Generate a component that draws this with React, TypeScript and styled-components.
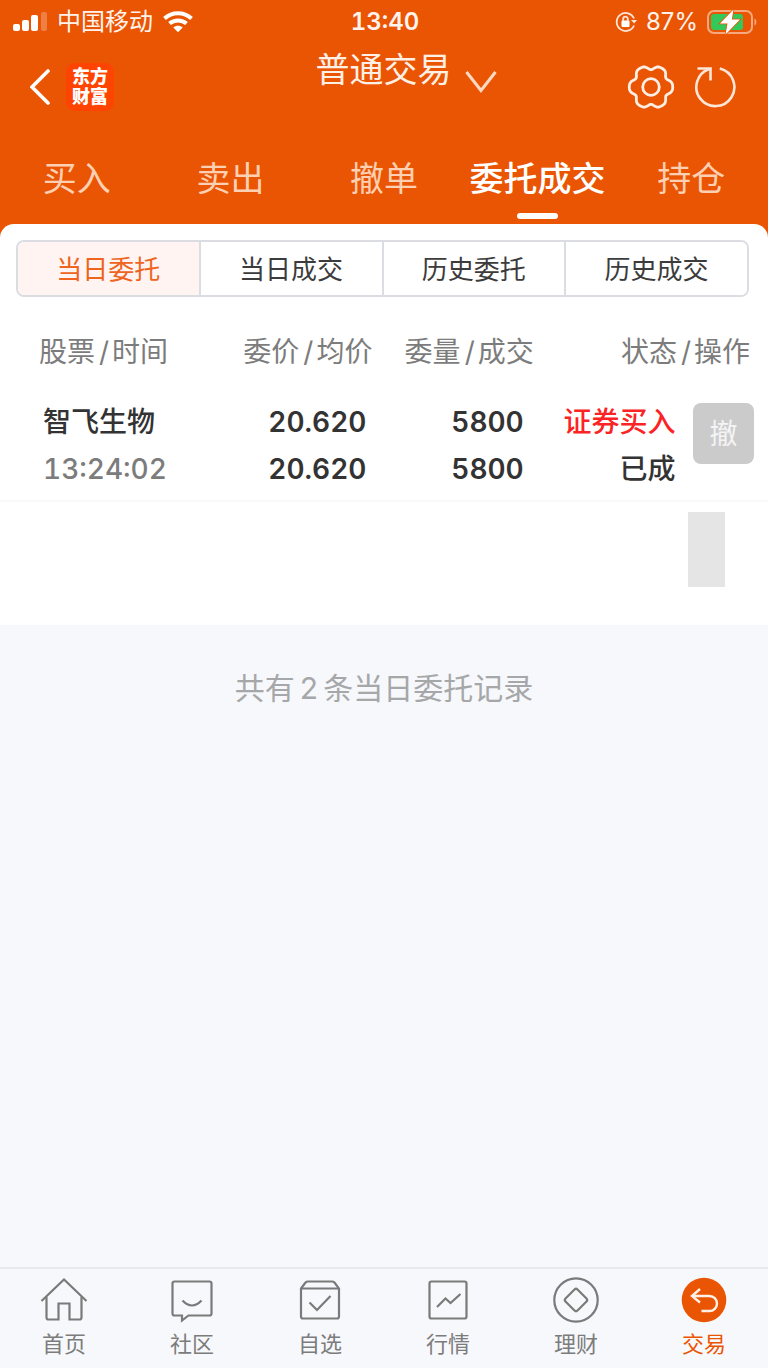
import React, { useState } from 'react';
import styled, { createGlobalStyle } from 'styled-components';

const ORANGE = '#ea5504';
const PAGE = '#f7f8fb';
const INK = '#333333';
const MUTED = '#7c7c7c';

const GlobalStyle = createGlobalStyle`
  *, *::before, *::after { box-sizing: border-box; }
  body {
    margin: 0;
    background: ${PAGE};
    color: ${INK};
    font-family: Inter, "Noto Sans CJK SC", sans-serif;
  }
  button {
    font: inherit;
    color: inherit;
    background: none;
    border: 0;
    padding: 0;
    cursor: pointer;
  }
  svg { display: block; flex: none; }
`;

const Screen = styled.div`
  min-height: 100vh;
  display: flex;
  flex-direction: column;
`;

const Header = styled.header`
  background: ${ORANGE};
  color: #fff;
`;

const StatusBar = styled.div`
  height: 42px;
  padding: 2px 11px 0 13px;
  display: grid;
  grid-template-columns: 1fr auto 1fr;
  align-items: center;
  font-size: 24px;
  line-height: 32px;
  color: #fff3ec;
`;

const StatusGroup = styled.div<{ $end?: boolean }>`
  display: flex;
  align-items: center;
  gap: ${(p) => (p.$end ? '9px' : '10px')};
  justify-content: ${(p) => (p.$end ? 'flex-end' : 'flex-start')};
`;

const Clock = styled.time`
  font-weight: 600;
  font-variant-numeric: tabular-nums;
`;

const NavBar = styled.div`
  height: 90px;
  padding: 0 31px 0 30px;
  display: grid;
  grid-template-columns: 1fr auto 1fr;
  align-items: center;
`;

const NavGroup = styled.div<{ $end?: boolean }>`
  display: flex;
  align-items: center;
  gap: ${(p) => (p.$end ? '18px' : '16px')};
  justify-content: ${(p) => (p.$end ? 'flex-end' : 'flex-start')};
`;

const Logo = styled.a`
  width: 48px;
  height: 48px;
  display: flex;
  align-items: center;
  justify-content: center;
  border-radius: 9px;
  background: #ff4300;
  color: #fff;
  font-size: 18px;
  line-height: 20px;
  font-weight: 900;
  text-align: center;
  text-decoration: none;
`;

const AccountButton = styled.button`
  display: flex;
  align-items: flex-end;
  gap: 13px;
  padding: 0 0 34px 45px;
  color: #fff0e6;
  font-size: 34px;
  line-height: 46px;
`;

const Tabs = styled.nav`
  display: flex;
`;

const Tab = styled.button<{ $active: boolean }>`
  flex: 1 1 0;
  min-width: 0;
  height: 92px;
  padding-top: 23px;
  display: flex;
  flex-direction: column;
  align-items: center;
  gap: 10px;
  white-space: nowrap;
  font-size: 34px;
  line-height: 48px;
  color: ${(p) => (p.$active ? '#fff' : '#fdd0b3')};
  font-weight: ${(p) => (p.$active ? 500 : 400)};

  &::after {
    content: '';
    width: 41px;
    height: 6px;
    border-radius: 3px;
    background: ${(p) => (p.$active ? '#fff' : 'transparent')};
  }
`;

const PanelBack = styled.div`
  background: linear-gradient(${ORANGE} 20px, #fff 20px);
`;

const Panel = styled.main`
  background: #fff;
  border-radius: 14px 14px 0 0;
  padding-top: 16px;
`;

const Segments = styled.div`
  margin: 0 19px 26px 16px;
  display: flex;
  border: 2px solid #dcdde3;
  border-radius: 8px;
  overflow: hidden;
`;

const Segment = styled.button<{ $active: boolean }>`
  flex: 1 1 0;
  min-width: 0;
  height: 53px;
  padding-top: 2px;
  font-size: 26px;
  line-height: 36px;
  color: ${(p) => (p.$active ? '#ee6420' : '#3c3c3c')};
  background: ${(p) => (p.$active ? '#fff4f1' : '#fff')};

  & + & { border-left: 2px solid #dcdde3; }
`;

const Orders = styled.table`
  width: 100%;
  table-layout: fixed;
  border-collapse: collapse;
  font-size: 28px;
`;

const Col = styled.col<{ $share: number }>`
  width: ${(p) => p.$share}%;
`;

const HeadCell = styled.th<{ $start?: boolean; $last?: boolean }>`
  height: 58px;
  padding: 0 ${(p) => (p.$last ? '18px' : '0')} 0 ${(p) => (p.$start ? '39px' : '0')};
  text-align: ${(p) => (p.$start ? 'left' : 'right')};
  font-weight: 400;
  line-height: 40px;
  color: ${MUTED};
  white-space: nowrap;
`;

const Slash = styled.span`
  padding: 0 3px 0 4px;
`;

const OrderRow = styled.tr`
  border-bottom: 2px solid #f9f9fa;
`;

const Cell = styled.td<{ $start?: boolean; $inset?: number }>`
  padding: 18px ${(p) => p.$inset ?? 8}px 7px ${(p) => (p.$start ? '43px' : '0')};
  text-align: ${(p) => (p.$start ? 'left' : 'right')};
  vertical-align: top;
  white-space: nowrap;
  font-variant-numeric: tabular-nums;
`;

const Line = styled.div<{ $tone?: 'muted' | 'buy' }>`
  line-height: 47px;
  font-weight: ${(p) => (p.$tone === 'muted' ? 500 : 600)};
  color: ${(p) => (p.$tone === 'muted' ? MUTED : p.$tone === 'buy' ? '#fb2323' : INK)};
`;

const Label = styled(Line)`
  font-weight: 500;
`;

const ActionCell = styled(Cell)`
  padding: 22px 14px 0 0;
`;

const CancelButton = styled.button`
  width: 61px;
  height: 61px;
  border-radius: 8px;
  background: #cbcbcb;
  color: #f4f4f4;
  line-height: 40px;
`;

const HiddenCell = styled.td`
  height: 124px;
  padding: 10px 43px 0 0;
  vertical-align: top;
`;

const Mask = styled.div`
  width: 37px;
  height: 75px;
  margin-left: auto;
  background: #e5e5e5;
`;

const Summary = styled.p`
  flex: 1;
  margin: 0;
  padding: 42px 16px;
  text-align: center;
  font-size: 30px;
  line-height: 42px;
  color: #a6a7a9;
`;

const Count = styled.span`
  padding: 0 5px;
`;

const BottomNav = styled.nav`
  height: 101px;
  display: flex;
  border-top: 2px solid #e6eaec;
`;

const BottomLink = styled.a<{ $active?: boolean }>`
  flex: 1 1 0;
  padding-top: 7px;
  display: flex;
  flex-direction: column;
  align-items: center;
  gap: 4px;
  font-size: 22px;
  line-height: 32px;
  text-decoration: none;
  color: ${(p) => (p.$active ? ORANGE : MUTED)};
`;

const SignalIcon = () => (
  <svg width="34" height="20" viewBox="0 0 34 20" fill="#fff" aria-hidden="true">
    <rect x="0" y="12" width="7" height="7" rx="2" />
    <rect x="9" y="8" width="7" height="11" rx="2" />
    <rect x="18" y="3" width="7" height="16" rx="2" />
    <rect x="28" y="0" width="6" height="19" rx="2" opacity="0.25" />
  </svg>
);

const WifiIcon = () => (
  <svg width="30" height="22" viewBox="0 0 30 22" fill="none" stroke="#fff" strokeWidth="4" aria-hidden="true">
    <path d="M1.500 7.500C9 .500 21 .500 28.500 7.500" />
    <path d="M6.500 12.600C11.200 8.400 18.800 8.400 23.500 12.600" />
    <path d="M10.300 16.500C12.800 14.200 17.200 14.200 19.700 16.500L15 21.300Z" fill="#fff" stroke="none" />
  </svg>
);

const LockIcon = () => (
  <svg width="22" height="22" viewBox="0 0 22 22" fill="none" stroke="#ffe6d8" strokeWidth="1.800" aria-hidden="true">
    <path d="M19 7.500A9 9 0 1 0 19 14.500" />
    <path d="M16 9H22L19.200 12.600Z" fill="#ffe6d8" stroke="none" />
    <rect x="6.500" y="9.500" width="8" height="6.500" rx="1" fill="#fff" stroke="none" />
    <path d="M8.200 10V8a2.300 2.300 0 0 1 4.600 0v2" />
  </svg>
);

const BatteryIcon = () => (
  <svg width="50" height="26" viewBox="0 0 50 26" aria-hidden="true">
    <rect x="1" y="2" width="44" height="22" rx="6" fill="none" stroke="#f6a980" strokeWidth="2" />
    <path d="M47.500 9.500C50 10.500 50 15.500 47.500 16.500Z" fill="#f6a980" />
    <rect x="4" y="5" width="32" height="16" rx="3" fill="#34c759" />
    <path
      d="M26.500 0.500L13 14.500H20.500L18.500 25.500L33 10.500H24.800Z"
      fill="#fff"
      stroke={ORANGE}
      strokeWidth="1.600"
      paintOrder="stroke"
    />
  </svg>
);

const BackIcon = () => (
  <svg width="20" height="36" viewBox="0 0 20 36" fill="none" stroke="#fff" strokeWidth="3.600" strokeLinecap="round" aria-hidden="true">
    <path d="M18 2L2 18L18 34" />
  </svg>
);

const ChevronIcon = () => (
  <svg width="32" height="22" viewBox="0 0 32 22" fill="none" stroke="#ffd9c2" strokeWidth="3" aria-hidden="true">
    <path d="M1.500 1L16 19.500L30.500 1" />
  </svg>
);

/* Six-lobed outline with flat lobes at every 60 degrees and a dip between them. */
const gearPath = (() => {
  const steps = 120;
  const points = Array.from({ length: steps }, (_, i) => {
    const a = (i / steps) * Math.PI * 2;
    const r = 20 + 2.2 * Math.cos(6 * a) - 0.5 * Math.cos(12 * a);
    return `${(24 + r * Math.cos(a)).toFixed(2)} ${(24 + r * Math.sin(a)).toFixed(2)}`;
  });
  return `M${points.join('L')}Z`;
})();

const GearIcon = () => (
  <svg width="48" height="48" viewBox="0 0 48 48" fill="none" stroke="#ffeee4" strokeWidth="2.800" strokeLinejoin="round" aria-hidden="true">
    <path d={gearPath} />
    <circle cx="24" cy="24" r="8.300" />
  </svg>
);

const RefreshIcon = () => (
  <svg width="44" height="44" viewBox="0 0 44 44" fill="none" stroke="#ffe6d8" strokeWidth="2.600" aria-hidden="true">
    <path d="M26.800 3.600A19 19 0 1 1 16.500 4" />
    <path d="M4.500 3.500H17.500V15.500" />
  </svg>
);

const LineIcon = ({ children }: { children: React.ReactNode }) => (
  <svg width="48" height="48" viewBox="0 0 48 48" fill="none" stroke="#7a7a7a" strokeWidth="2.200" aria-hidden="true">
    {children}
  </svg>
);

const bottomItems = [
  {
    label: '首页',
    icon: (
      <LineIcon>
        <path d="M1.500 25L24 3.500L46.500 25" />
        <path d="M6.500 21V41.500Q6.500 43.500 8.500 43.500H18.500V27.500H29.500V43.500H39.500Q41.500 43.500 41.500 41.500V21" />
      </LineIcon>
    ),
  },
  {
    label: '社区',
    icon: (
      <LineIcon>
        <path d="M6.500 5.500H41.500Q43.500 5.500 43.500 7.500V37.500Q43.500 39.500 41.500 39.500H20.500L14 44.500V39.500H6.500Q4.500 39.500 4.500 37.500V7.500Q4.500 5.500 6.500 5.500Z" />
        <path d="M14.500 24.500Q24 34.500 33.500 24.500" />
      </LineIcon>
    ),
  },
  {
    label: '自选',
    icon: (
      <LineIcon>
        <path d="M5 12.500L9.500 6.500Q10.500 5.500 12 5.500H36Q37.500 5.500 38.500 6.500L43 12.500V40.500Q43 42.500 41 42.500H7Q5 42.500 5 40.500Z" />
        <path d="M5 12.500H43" />
        <path d="M13.500 26.500L21 34L34.500 20" />
      </LineIcon>
    ),
  },
  {
    label: '行情',
    icon: (
      <LineIcon>
        <rect x="5.500" y="5.500" width="37" height="37" rx="2" />
        <path d="M13 31L21.500 22.500L26.500 27L36.500 18" />
      </LineIcon>
    ),
  },
  {
    label: '理财',
    icon: (
      <LineIcon>
        <circle cx="24" cy="24" r="21.700" />
        <path d="M22.500 13.500Q24 12 25.500 13.500L34.500 22.500Q36 24 34.500 25.500L25.500 34.500Q24 36 22.500 34.500L13.500 25.500Q12 24 13.500 22.500Z" />
      </LineIcon>
    ),
  },
  {
    label: '交易',
    icon: (
      <svg width="48" height="48" viewBox="0 0 48 48" fill="none" stroke="#fff0e8" strokeWidth="2.400" aria-hidden="true">
        <circle cx="24" cy="24" r="22.300" fill={ORANGE} stroke="none" />
        <path d="M20 13L12 20L20 26.500" />
        <path d="M12 20H29.500A7.500 7.500 0 0 1 29.500 35H21.500" />
      </svg>
    ),
  },
];

const tabs = ['买入', '卖出', '撤单', '委托成交', '持仓'];
const segments = ['当日委托', '当日成交', '历史委托', '历史成交'];

const Pair = ({ a, b }: { a: string; b: string }) => (
  <>
    {a}
    <Slash>/</Slash>
    {b}
  </>
);

export default function App() {
  const [tab, setTab] = useState('委托成交');
  const [segment, setSegment] = useState('当日委托');

  return (
    <Screen>
      <GlobalStyle />
      <Header>
        <StatusBar>
          <StatusGroup>
            <SignalIcon />
            <span>中国移动</span>
            <WifiIcon />
          </StatusGroup>
          <Clock>13:40</Clock>
          <StatusGroup $end>
            <LockIcon />
            <span>87%</span>
            <BatteryIcon />
          </StatusGroup>
        </StatusBar>
        <NavBar>
          <NavGroup>
            <button type="button" aria-label="返回">
              <BackIcon />
            </button>
            <Logo href="#">
              东方
              <br />
              财富
            </Logo>
          </NavGroup>
          <AccountButton type="button">
            普通交易
            <ChevronIcon />
          </AccountButton>
          <NavGroup $end>
            <button type="button" aria-label="设置">
              <GearIcon />
            </button>
            <button type="button" aria-label="刷新">
              <RefreshIcon />
            </button>
          </NavGroup>
        </NavBar>
        <Tabs>
          {tabs.map((name) => (
            <Tab key={name} type="button" $active={name === tab} onClick={() => setTab(name)}>
              {name}
            </Tab>
          ))}
        </Tabs>
      </Header>

      <PanelBack>
        <Panel>
          <Segments>
            {segments.map((name) => (
              <Segment key={name} type="button" $active={name === segment} onClick={() => setSegment(name)}>
                {name}
              </Segment>
            ))}
          </Segments>
          <Orders>
            <colgroup>
              <Col $share={27} />
              <Col $share={21.5} />
              <Col $share={21} />
              <Col $share={19.5} />
              <Col $share={11} />
            </colgroup>
            <thead>
              <tr>
                <HeadCell $start><Pair a="股票" b="时间" /></HeadCell>
                <HeadCell><Pair a="委价" b="均价" /></HeadCell>
                <HeadCell><Pair a="委量" b="成交" /></HeadCell>
                <HeadCell colSpan={2} $last><Pair a="状态" b="操作" /></HeadCell>
              </tr>
            </thead>
            <tbody>
              <OrderRow>
                <Cell $start>
                  <Label>智飞生物</Label>
                  <Line $tone="muted">13:24:02</Line>
                </Cell>
                <Cell $inset={6}>
                  <Line>20.620</Line>
                  <Line>20.620</Line>
                </Cell>
                <Cell $inset={10}>
                  <Line>5800</Line>
                  <Line>5800</Line>
                </Cell>
                <Cell>
                  <Label $tone="buy">证券买入</Label>
                  <Label>已成</Label>
                </Cell>
                <ActionCell>
                  <CancelButton type="button">撤</CancelButton>
                </ActionCell>
              </OrderRow>
              <tr>
                <HiddenCell colSpan={5}>
                  <Mask />
                </HiddenCell>
              </tr>
            </tbody>
          </Orders>
        </Panel>
      </PanelBack>

      <Summary>
        共有<Count>2</Count>条当日委托记录
      </Summary>

      <BottomNav>
        {bottomItems.map((item) => (
          <BottomLink key={item.label} href="#" $active={item.label === '交易'}>
            {item.icon}
            {item.label}
          </BottomLink>
        ))}
      </BottomNav>
    </Screen>
  );
}
